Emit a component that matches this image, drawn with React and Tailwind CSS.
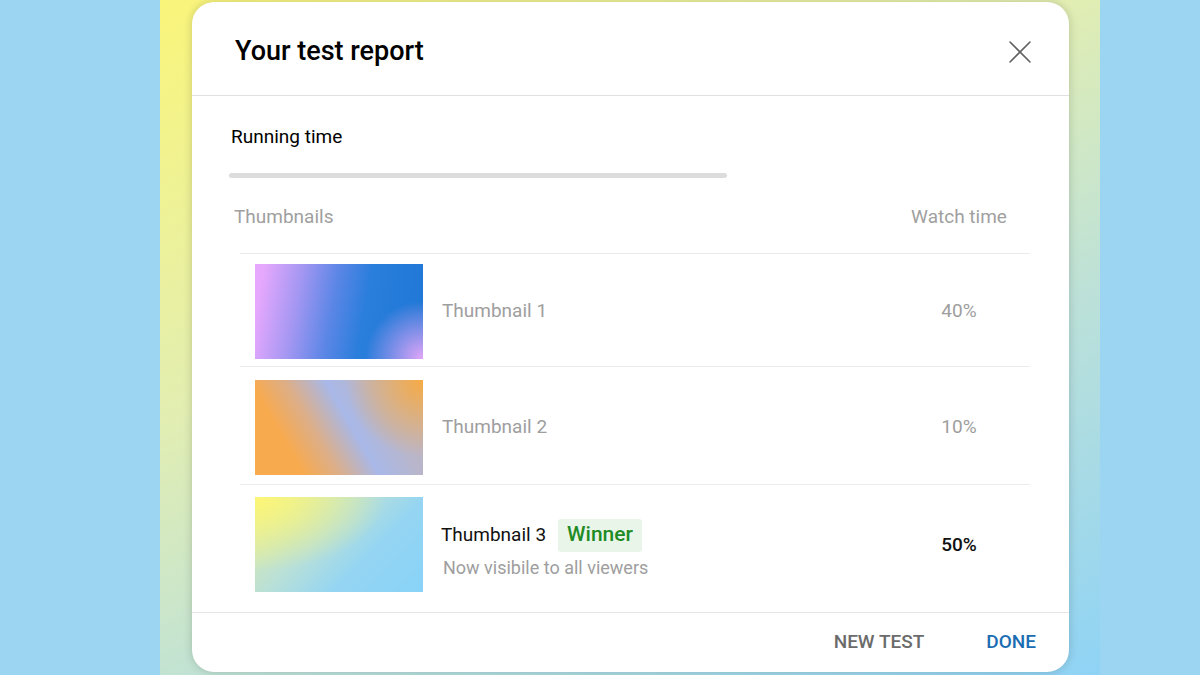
import React from "react";

const rows = [
  {
    name: "Thumbnail 1",
    pct: "40%",
    pad: "pt-[10px] pb-[7px]",
    thumb:
      "bg-[radial-gradient(circle_at_100%_100%,#e3a6f9_0%,rgba(227,166,249,0)_30%),linear-gradient(100deg,#e6a8fd_5%,#a497f2_26%,#5b86e6_46%,#2a7edc_64%,#1f77d5_100%)]",
  },
  {
    name: "Thumbnail 2",
    pct: "10%",
    pad: "pt-[13px] pb-[9px]",
    thumb:
      "bg-[radial-gradient(circle_at_100%_0%,#f6ab45_0%,rgba(246,171,69,0)_40%),linear-gradient(60deg,#f8aa4e_22%,#dcae88_38%,#a8b8e8_56%,#b8b6cc_74%,#c4b4b8_100%)]",
  },
  {
    name: "Thumbnail 3",
    pct: "50%",
    winner: true,
    pad: "pt-[12px] pb-[18px]",
    thumb:
      "bg-[radial-gradient(ellipse_at_0%_0%,#fcf677_0%,rgba(252,246,119,0)_55%),linear-gradient(135deg,#e6ee9c_0%,#b9e0d8_40%,#95d5f2_65%,#88d3f8_100%)]",
  },
];

const CloseIcon = () => (
  <svg width="24" height="24" viewBox="0 0 24 24" fill="none">
    <path d="M2 2L22 22M22 2L2 22" stroke="#616161" strokeWidth="1.6" strokeLinecap="round" />
  </svg>
);

export default function App() {
  return (
    <div className="flex h-[675px] w-[1200px] overflow-hidden bg-[#9bd5f1] pl-[160px] font-['Roboto',sans-serif]">
      <div className="w-[940px] bg-[linear-gradient(155deg,#faf57a_0%,#e2eeb2_38%,#bde1d8_65%,#8fd3f5_100%)] pl-[32px] pr-[31px] pt-[2px]">
        <div className="flex h-[670px] flex-col overflow-hidden rounded-[22px] bg-white shadow-[0_0_10px_rgba(0,0,0,0.18)]">
          {/* header */}
          <div className="flex h-[94px] shrink-0 items-center justify-between border-b border-[#e0e0e0] pl-[43px] pr-[37px] pt-[6px]">
            <h1 className="text-[27px] font-medium text-black">Your test report</h1>
            <CloseIcon />
          </div>

          {/* body */}
          <div className="flex-1 px-[39px] pt-[29px]">
            <div className="text-[19px] leading-[24px] text-black">Running time</div>
            <div className="mt-[24px] -ml-[2px] h-[5px] w-[498px] rounded-full bg-[#dcdcdc]"></div>

            <div className="mt-[27px] flex items-center justify-between pl-[3px] pr-[21px] text-[19px] leading-[24px] text-[#a0a0a0]">
              <span>Thumbnails</span>
              <span className="w-[100px] text-center">Watch time</span>
            </div>

            <div className="ml-[9px] mt-[24px]">
              {rows.map((r, i) => (
                <div
                  key={i}
                  className={`flex items-center pl-[15px] pr-[21px] ${r.pad} border-[#ececec] ${i < rows.length - 1 ? "border-b" : ""} ${i === 0 ? "border-t" : ""}`}
                >
                  <div className={`h-[95px] w-[168px] shrink-0 ${r.thumb}`}></div>
                  <div className="ml-[18px] flex-1">
                    {r.winner ? (
                      <div className="pt-[8px]">
                        <div className="flex items-center">
                          <span className="text-[19px] leading-[24px] text-[#111]">{r.name}</span>
                          <span className="ml-[12px] flex h-[33px] items-center rounded-[3px] bg-[#e9f5e9] px-[9px] text-[21px] font-medium text-[#1f8b25]">
                            Winner
                          </span>
                        </div>
                        <div className="ml-[2px] mt-[5px] text-[18px] leading-[22px] text-[#9e9e9e]">Now visibile to all viewers</div>
                      </div>
                    ) : (
                      <span className="ml-[1px] text-[19px] text-[#9e9e9e]">{r.name}</span>
                    )}
                  </div>
                  <div
                    className={`w-[100px] text-center text-[19px] ${r.winner ? "pt-[2px] font-medium text-[#111]" : "text-[#9e9e9e]"}`}
                  >
                    {r.pct}
                  </div>
                </div>
              ))}
            </div>
          </div>

          {/* footer */}
          <div className="flex h-[60px] shrink-0 items-center justify-end gap-[62px] border-t border-[#e6e6e6] pr-[33px] text-[19px] font-medium">
            <button className="text-[#6b6b6b]">NEW TEST</button>
            <button className="text-[#1b6db3]">DONE</button>
          </div>
        </div>
      </div>
    </div>
  );
}
